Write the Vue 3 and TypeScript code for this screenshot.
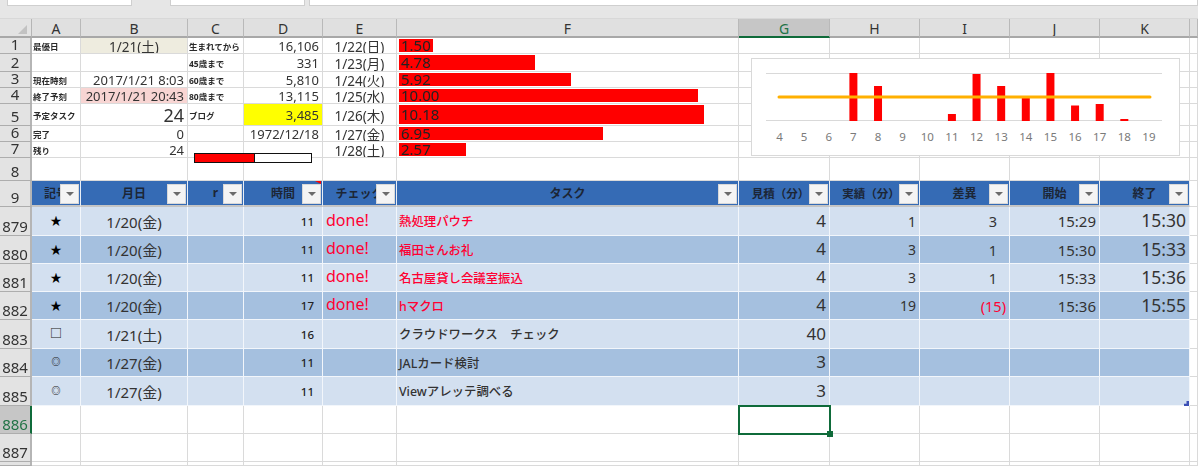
<script setup lang="ts">
interface Cell { t?: string; c?: string; bar?: number; filter?: boolean; note?: boolean }
interface Row { head: string; hc?: string; cells: Cell[] }

const letters = ['A', 'B', 'C', 'D', 'E', 'F', 'G', 'H', 'I', 'J', 'K', '']

const blanks = (n: number): Cell[] => Array.from({ length: n }, () => ({}))

const summary: [string, Cell, Cell, Cell, Cell, string, number | null][] = [
  ['1', { t: '最優日', c: 'lbl' }, { t: '1/21(土)', c: 'ctr md beige' }, { t: '生まれてから', c: 'lbl' }, { t: '16,106', c: 'rgt md' }, '1/22(日)', 1.5],
  ['2', {}, {}, { t: '45歳まで', c: 'lbl' }, { t: '331', c: 'rgt md' }, '1/23(月)', 4.78],
  ['3', { t: '現在時刻', c: 'lbl' }, { t: '2017/1/21 8:03', c: 'rgt md' }, { t: '60歳まで', c: 'lbl' }, { t: '5,810', c: 'rgt md' }, '1/24(火)', 5.92],
  ['4', { t: '終了予刻', c: 'lbl' }, { t: '2017/1/21 20:43', c: 'rgt md pink' }, { t: '80歳まで', c: 'lbl' }, { t: '13,115', c: 'rgt md' }, '1/25(水)', 10.0],
  ['5', { t: '予定タスク', c: 'lbl' }, { t: '24', c: 'rgt xl' }, { t: 'ブログ', c: 'lbl' }, { t: '3,485', c: 'rgt md yellow' }, '1/26(木)', 10.18],
  ['6', { t: '完了', c: 'lbl' }, { t: '0', c: 'rgt md' }, {}, { t: '1972/12/18', c: 'rgt md' }, '1/27(金)', 6.95],
  ['7', { t: '残り', c: 'lbl' }, { t: '24', c: 'rgt md' }, {}, {}, '1/28(土)', 2.57],
  ['8', {}, {}, {}, {}, '', null],
]

const headers = ['記号', '月日', 'r', '時間', 'チェック', 'タスク', '見積（分）', '実績（分）', '差異', '開始', '終了']

type Task = [string, string, string, string, string, string, string, string, string, string, string]
const tasks: Task[] = [
  ['879', '★', '1/20(金)', '11', 'done!', '熱処理パウチ', '4', '1', '3', '15:29', '15:30'],
  ['880', '★', '1/20(金)', '11', 'done!', '福田さんお礼', '4', '3', '1', '15:30', '15:33'],
  ['881', '★', '1/20(金)', '11', 'done!', '名古屋貸し会議室振込', '4', '3', '1', '15:33', '15:36'],
  ['882', '★', '1/20(金)', '17', 'done!', 'hマクロ', '4', '19', '(15)', '15:36', '15:55'],
  ['883', '□', '1/21(土)', '16', '', 'クラウドワークス　チェック', '40', '', '', '', ''],
  ['884', '◎', '1/27(金)', '11', '', 'JALカード検討', '3', '', '', '', ''],
  ['885', '◎', '1/27(金)', '11', '', 'Viewアレッテ調べる', '3', '', '', '', ''],
]

const markClass = (m: string): string => (m === '★' ? 'star' : m === '□' ? 'square' : 'circle')

const rows: Row[] = [
  ...summary.map(([head, a, b, c, d, e, f]) => ({
    head,
    cells: [
      a, b, c, d,
      { t: e, c: 'ctr md' },
      f === null ? {} : { t: f.toFixed(2), c: 'barcell', bar: f },
      ...blanks(6),
    ],
  })),
  {
    head: '9',
    cells: [
      ...headers.map((t, i) => ({ t, c: i === 6 || i === 7 ? 'th wide' : 'th', filter: true, note: i === 3 })),
      {},
    ],
  },
  ...tasks.map((r, i) => {
    const red = i < 4
    const band = i % 2 === 0 ? 'light' : 'dark'
    const cell = (t: string, c: string): Cell => ({ t, c: `${band} ${c}` })
    return {
      head: r[0],
      cells: [
        cell(r[1], `ctr ${markClass(r[1])}`),
        cell(r[2], 'ctr date'),
        cell('', ''),
        cell(r[3], 'rgt time'),
        cell(r[4], 'done'),
        cell(r[5], red ? 'task redtxt' : 'task'),
        cell(r[6], 'rgt est'),
        cell(r[7], 'rgt act'),
        cell(r[8], r[8].startsWith('(') ? 'rgt diff paren' : 'rgt diff'),
        cell(r[9], 'rgt start'),
        cell(r[10], 'rgt end'),
        {},
      ],
    }
  }),
  { head: '886', hc: 'active', cells: blanks(12) },
  { head: '887', cells: blanks(12) },
  { head: '', cells: blanks(12) },
]

const barWidth = (v: number): string => `${31.2 * v - 13}px`

const tops: (number | null)[] = [null, null, null, 14, 27, null, null, 55, 15, 27, 39, 14, 46.5, 45, 60, null]
const chart = tops.map((top, i) => ({ label: String(i + 4), x: 27.5 + i * 24.63, top }))
</script>

<template>
  <div class="page">
    <div class="topbar">
      <div class="box box1"></div>
      <div class="box box2"></div>
      <div class="box box3"></div>
    </div>
    <div class="sheet">
      <div class="corner"><span class="tri"></span></div>
      <div
        v-for="l in letters"
        :key="'col' + l"
        class="colhead"
        :class="{ sel: l === 'G' }"
      >{{ l }}</div>

      <template v-for="row in rows" :key="'r' + row.head">
        <div class="rowhead" :class="row.hc">{{ row.head }}</div>
        <div
          v-for="(cell, i) in row.cells"
          :key="i"
          class="cell"
          :class="cell.c"
        >
          <span v-if="cell.bar" class="bar" :style="{ width: barWidth(cell.bar) }"></span>
          <span class="txt">{{ cell.t }}</span>
          <span v-if="cell.note" class="note"></span>
          <span v-if="cell.filter" class="filter"><i></i></span>
        </div>
      </template>

      <div class="progress"><div class="fill"></div></div>

      <div class="chart">
        <svg width="427" height="96" viewBox="0 0 427 96">
          <line x1="14" x2="410" y1="14.5" y2="14.5" class="grid" />
          <line x1="14" x2="410" y1="61.5" y2="61.5" class="grid" />
          <template v-for="b in chart" :key="b.label">
            <rect
              v-if="b.top !== null"
              :x="b.x - 4"
              :y="b.top"
              width="8"
              :height="62 - b.top"
              fill="#ff0000"
            />
            <text :x="b.x" y="82" text-anchor="middle" class="axis">{{ b.label }}</text>
          </template>
          <line x1="27" x2="398" y1="38" y2="38" class="avg" />
        </svg>
      </div>

      <div class="selection"><span class="handle"></span></div>
      <span class="resize"></span>
    </div>
  </div>
</template>

<style>
html, body { margin: 0; background: #fff; overflow: hidden; }
</style>

<style scoped>
.page {
  width: 1198px;
  height: 466px;
  overflow: hidden;
  font-family: "Noto Sans", "Noto Sans CJK JP", sans-serif;
  color: #333;
  background: #fff;
}
.topbar {
  height: 19px;
  box-sizing: border-box;
  background: #e6e6e6;
  display: flex;
  align-items: flex-start;
  padding-left: 7px;
  border-bottom: 1px solid #d8d8d8;
}
.box {
  height: 6px;
  box-sizing: border-box;
  background: #fff;
  border: 1px solid #cfcfcf;
  border-top: 0;
}
.box1 { width: 125px; margin-right: 38px; }
.box2 { width: 135px; margin-right: 4px; }
.box3 { flex: 1; }

.sheet {
  position: relative;
  height: 447px;
  display: grid;
  grid-template-columns: 32px 49px 107px 56px 79px 74px 342px 91px 90px 90px 90px 90px 8px;
  grid-template-rows: 19px 16px 18px 16px 16px 22px 16px 16px 23px 26px 29px 28px 28px 28px 29px 28px 29px 28px 28px 4px;
  filter: blur(0.45px);
}
.corner {
  background: #e3e3e3;
  border-right: 1px solid #b5b5b5;
  border-bottom: 2px solid #a8a8a8;
  position: relative;
}
.tri {
  position: absolute;
  right: 4px;
  bottom: 2px;
  width: 0;
  height: 0;
  border-left: 9px solid transparent;
  border-bottom: 9px solid #c2c2c2;
}
.colhead {
  background: #e0e0e0;
  border-right: 1px solid #b9b9b9;
  border-bottom: 2px solid #a8a8a8;
  text-align: center;
  font-size: 14px;
  line-height: 20px;
  overflow: hidden;
}
.colhead.sel {
  background: #c6c6c6;
  color: #217346;
  border-bottom-color: #0f6b3a;
}
.rowhead {
  background: #e3e3e3;
  border-right: 2px solid #b5b5b5;
  border-bottom: 1px solid #adadad;
  font-size: 15px;
  line-height: 17px;
  text-align: center;
  overflow: hidden;
  display: flex;
  align-items: flex-end;
  justify-content: center;
}
.rowhead.active {
  background: #c6c6c6;
  color: #217346;
  border-right-color: #0f6b3a;
}
.cell {
  position: relative;
  box-sizing: border-box;
  border-right: 1.5px solid #dadada;
  border-bottom: 1.5px solid #dadada;
  white-space: nowrap;
  overflow: hidden;
  display: flex;
  align-items: center;
  min-width: 0;
}
.txt { position: relative; }
.lbl { font-size: 8.5px; font-weight: 700; padding-left: 1px; color: #2a2a2a; }
.ctr { justify-content: center; }
.rgt { justify-content: flex-end; }
.md { font-size: 13px; padding-right: 3px; }
.ctr.md { font-size: 13.5px; padding-right: 0; }
.xl { font-size: 18px; padding-right: 3px; }
.beige { background: #eeecdf; }
.pink { background: #f8d5d3; }
.yellow { background: #ffff00; }

.barcell { font-size: 15px; color: #222; padding-left: 4px; padding-bottom: 1px; }
.bar {
  position: absolute;
  left: 2px;
  top: 1px;
  bottom: 1px;
  background: #ff0000;
}

.th {
  background: #356bb5;
  color: #1c2636;
  font-size: 12px;
  font-weight: 700;
  justify-content: center;
  border-right: 1.5px solid #e8eef6;
  border-bottom: 2px solid #c4c4c4;
  padding-bottom: 1px;
}
.th.wide { font-size: 11.5px; padding-right: 7px; }
.filter {
  position: absolute;
  right: 1px;
  top: 3px;
  width: 19px;
  height: 20px;
  box-sizing: border-box;
  background: #f4f4f4;
  border: 1px solid #d8d8d8;
  display: flex;
  align-items: center;
  justify-content: center;
}
.filter i {
  width: 0;
  height: 0;
  border-left: 4px solid transparent;
  border-right: 4px solid transparent;
  border-top: 4.5px solid #6b6b6b;
}
.note {
  position: absolute;
  right: 1px;
  top: 0;
  width: 0;
  height: 0;
  border-left: 6px solid transparent;
  border-top: 3px solid #ff0000;
}

.light { background: #d3e0f0; border-right-color: #f2f6fb; border-bottom-color: #f2f6fb; }
.dark { background: #a5c0df; border-right-color: #f2f6fb; border-bottom-color: #f2f6fb; }
.star { font-size: 11.5px; color: #000; padding-bottom: 2px; }
.square { font-size: 12px; font-weight: 700; color: #222; padding-bottom: 2px; }
.circle { font-size: 9px; font-weight: 700; color: #222; padding-bottom: 2px; }
.date { font-size: 15px; }
.time { font-size: 11.5px; font-weight: 500; padding-right: 8px; color: #222; }
.done { font-size: 16px; color: #ff0033; padding-left: 3px; padding-bottom: 3px; }
.task { font-size: 12.4px; font-weight: 500; padding-left: 2px; }
.redtxt { color: #ff0033; }
.est { font-size: 17px; padding-right: 3px; padding-bottom: 2px; }
.act { font-size: 14px; padding-right: 3px; }
.diff { font-size: 14.5px; padding-right: 12px; }
.diff.paren { color: #ff0033; padding-right: 3px; }
.start { font-size: 15px; padding-right: 3px; }
.end { font-size: 17.5px; padding-right: 3px; padding-bottom: 2px; }

.progress {
  position: absolute;
  left: 194px;
  top: 134px;
  width: 118px;
  height: 10px;
  box-sizing: border-box;
  border: 1px solid #111;
  background: #fff;
}
.fill { width: 50.5%; height: 100%; background: #ff0000; border-right: 1px solid #111; }

.chart {
  position: absolute;
  left: 752px;
  top: 40px;
  width: 427px;
  height: 96px;
  background: #fff;
  outline: 1px solid #d9d9d9;
}
.chart svg { display: block; }
.grid { stroke: #d9d9d9; stroke-width: 1; }
.axis { font-size: 11.5px; fill: #7a7a7a; font-family: "Noto Sans", sans-serif; }
.avg { stroke: #ffb000; stroke-width: 3; stroke-linecap: round; }

.selection {
  position: absolute;
  left: 738px;
  top: 386px;
  width: 93px;
  height: 30px;
  box-sizing: border-box;
  border: 2px solid #0f6b3a;
}
.handle {
  position: absolute;
  right: -4px;
  bottom: -4px;
  width: 6px;
  height: 6px;
  background: #0f6b3a;
}
.resize {
  position: absolute;
  left: 1184px;
  top: 382px;
  width: 5px;
  height: 5px;
  background: #3b4fb5;
  clip-path: polygon(100% 0, 100% 100%, 0 100%, 0 55%, 50% 55%, 50% 0);
}
</style>
